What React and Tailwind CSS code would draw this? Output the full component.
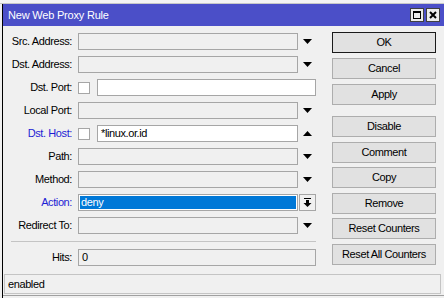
import React from "react";

const Arrow = ({ up }) => (
  <div className="w-[18px] h-[17px] flex items-center justify-center">
    <svg width="9" height="5" viewBox="0 0 9 5">
      {up ? (
        <polygon points="0,5 9,5 4.5,0" fill="#000" />
      ) : (
        <polygon points="0,0 9,0 4.5,5" fill="#000" />
      )}
    </svg>
  </div>
);

const Label = ({ children, blue }) => (
  <div
    className={`w-[70px] shrink-0 text-right pr-[1px] ${
      blue ? "text-[#1d1dd4]" : "text-black"
    }`}
  >
    {children}
  </div>
);

const Box = ({ children, white, className = "" }) => (
  <div
    className={`h-[17px] border border-[#a6a6a6] flex items-center pl-[3px] ${
      white ? "bg-white" : "bg-[#f0f0f0]"
    } ${className}`}
  >
    {children}
  </div>
);

const Check = () => (
  <div className="w-[12px] h-[12px] border border-[#a6a6a6] bg-white shrink-0" />
);

const DropRow = ({ label, blue, white, up, value }) => (
  <div className="flex items-center h-[17px]">
    <Label blue={blue}>{label}</Label>
    <Box white={white} className="ml-[5px] w-[220px]">
      {value}
    </Box>
    <Arrow up={up} />
  </div>
);

const buttons1 = ["OK", "Cancel", "Apply"];
// spacing in the dialog alternates between 5px and 4px gaps
const buttons2 = [
  { label: "Disable", mt: "mt-[11px]" },
  { label: "Comment", mt: "mt-[5px]" },
  { label: "Copy", mt: "mt-[4px]" },
  { label: "Remove", mt: "mt-[5px]" },
  { label: "Reset Counters", mt: "mt-[4px]" },
  { label: "Reset All Counters", mt: "mt-[5px]" },
];

const Btn = ({ children, primary, className = "" }) => (
  <div
    className={`h-[21px] w-[104px] flex items-center justify-center bg-[#e1e1e1] border ${
      primary ? "border-[#1a1a1a]" : "border-[#adadad]"
    } ${className}`}
  >
    {children}
  </div>
);

export default function App() {
  return (
    <div
      className="w-[444px] h-[298px] bg-[#f0f0f0] overflow-hidden text-[11px] tracking-[-0.4px] leading-none"
      style={{ fontFamily: '"Liberation Sans", Arial, sans-serif' }}
    >
      <div className="h-[4px] bg-[#f4f4f4] border-b border-[#c8c8c8]" />
      <div className="ml-[2px] border-l border-black h-[294px] flex flex-col">
        <div className="h-[22px] bg-[#4b4fc8] flex items-center justify-between pl-[5px] pr-[4px]">
          <span className="text-white text-[11px] tracking-[-0.2px]">
            New Web Proxy Rule
          </span>
          <div className="flex gap-[2px]">
            <div className="w-[14px] h-[14px] bg-[#ececec] border border-[#404040] flex items-center justify-center">
              <div className="w-[8px] h-[8px] border border-black border-t-2" />
            </div>
            <div className="w-[14px] h-[14px] bg-[#ececec] border border-[#404040] flex items-center justify-center">
              <svg width="8" height="8" viewBox="0 0 8 8">
                <path d="M1 1 L7 7 M7 1 L1 7" stroke="#000" strokeWidth="2" />
              </svg>
            </div>
          </div>
        </div>

        <div className="flex pt-[6px] h-[248px]">
          <div className="w-[313px] flex flex-col pt-[1px]">
            <div className="flex flex-col gap-[6px]">
              <DropRow label="Src. Address:" />
              <DropRow label="Dst. Address:" />
              <div className="flex items-center h-[17px]">
                <Label>Dst. Port:</Label>
                <div className="ml-[5px]">
                  <Check />
                </div>
                <Box white className="ml-[7px] w-[219px]" />
              </div>
              <DropRow label="Local Port:" />
              <div className="flex items-center h-[17px]">
                <Label blue>Dst. Host:</Label>
                <div className="ml-[5px]">
                  <Check />
                </div>
                <Box white className="ml-[7px] w-[201px]">
                  *linux.or.id
                </Box>
                <Arrow up />
              </div>
              <DropRow label="Path:" />
              <DropRow label="Method:" />
              <div className="flex items-center h-[17px]">
                <Label blue>Action:</Label>
                <div className="ml-[5px] w-[220px] h-[17px] border border-[#a6a6a6] bg-white p-[1px]">
                  <div className="h-full bg-[#0078d7] text-white flex items-center pl-[1px]">
                    deny
                  </div>
                </div>
                <div className="ml-[1px] w-[17px] h-[17px] border border-[#a6a6a6] flex items-center justify-center">
                  <svg width="9" height="9" viewBox="0 0 9 9">
                    <rect x="1" y="0" width="7" height="1" fill="#000" />
                    <rect x="3" y="2" width="3" height="3" fill="#000" />
                    <polygon points="0.5,5 8.5,5 4.5,9" fill="#000" />
                  </svg>
                </div>
              </div>
              <DropRow label="Redirect To:" />
            </div>
            <div className="ml-[8px] mt-[7px] mb-[7px] h-[1px] bg-[#c4c4c4]" />
            <div className="flex items-center h-[17px]">
              <Label>Hits:</Label>
              <Box className="ml-[5px] w-[238px]">0</Box>
            </div>
          </div>

          <div className="ml-[16px] flex flex-col">
            <div className="flex flex-col gap-[5px]">
              {buttons1.map((b, i) => (
                <Btn key={b} primary={i === 0}>
                  {b}
                </Btn>
              ))}
            </div>
            {buttons2.map((b) => (
              <Btn key={b.label} className={b.mt}>
                {b.label}
              </Btn>
            ))}
          </div>
        </div>

        <div className="ml-[1px] mr-[3px] h-[20px] border border-[#c4c4c4] flex items-center pl-[3px]">
          enabled
        </div>
        <div className="h-[1px] bg-[#a0a0a0] mt-[1px]" />
      </div>
    </div>
  );
}
